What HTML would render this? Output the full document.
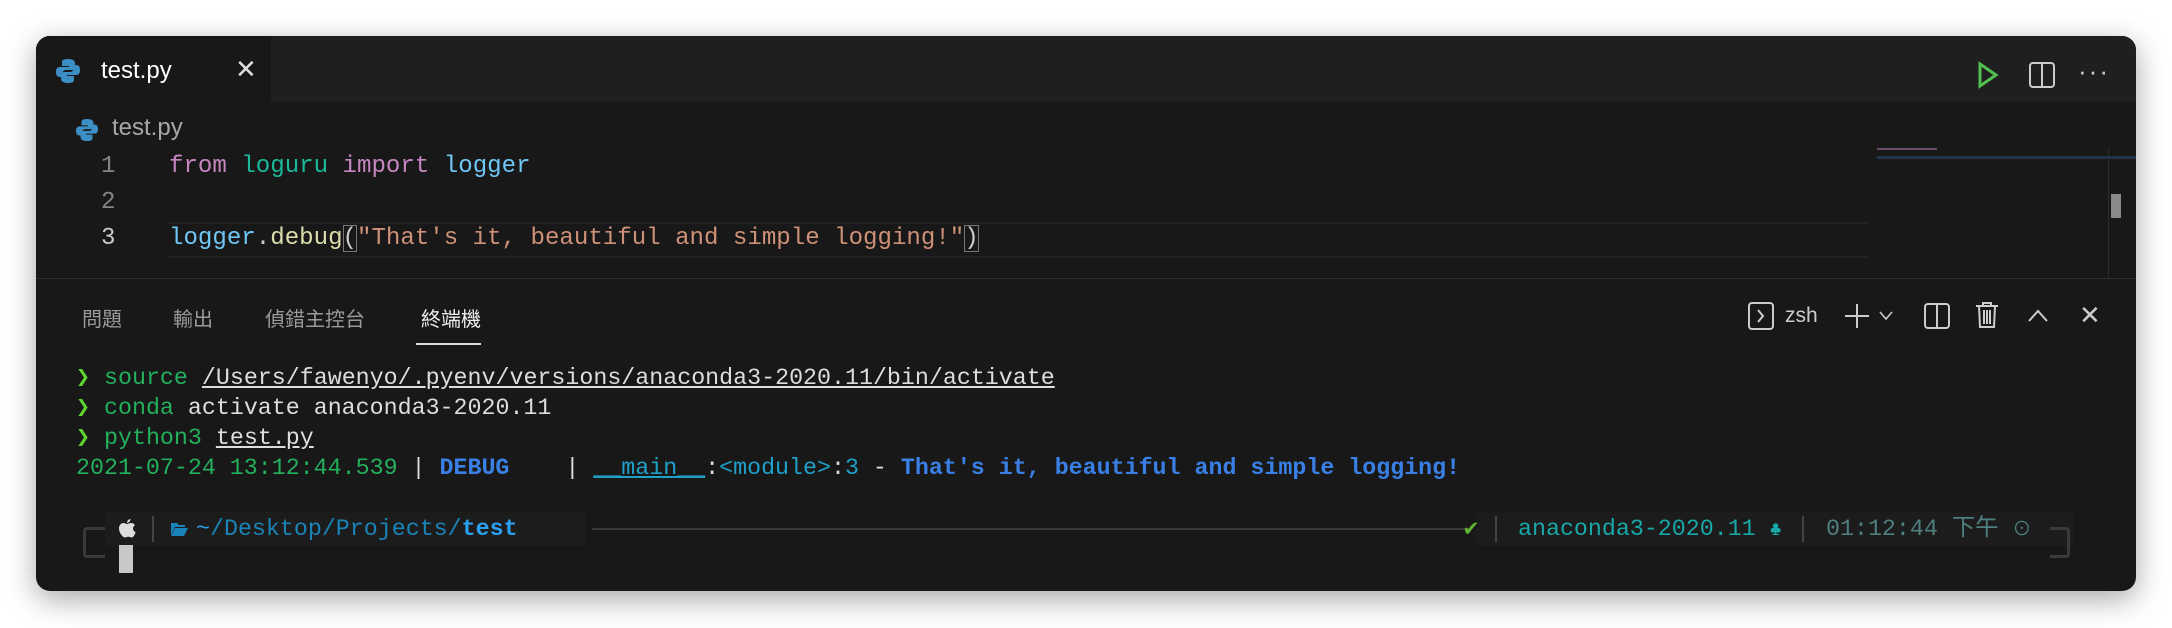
<!DOCTYPE html>
<html><head><meta charset="utf-8"><style>
*{margin:0;padding:0;box-sizing:border-box}
body{width:2172px;height:628px;background:#fff;position:relative;overflow:hidden;font-family:"Liberation Sans","Noto Sans CJK TC",sans-serif}
.win{position:absolute;left:36px;top:36px;width:2100px;height:555px;background:#181818;border-radius:14px;overflow:hidden;box-shadow:0 8px 30px rgba(0,0,0,.35)}
.a{position:absolute;white-space:pre}
.mono{font-family:"Liberation Mono","Noto Sans CJK TC",monospace}
.code{font-size:24.1px;line-height:36px}
.term{font-size:23.3px;line-height:30px}
</style></head><body>
<div class="win">
 <div class="a" style="left:0;top:0;width:2100px;height:66px;background:#1f1f1f"></div>
 <div class="a" style="left:0;top:0;width:235px;height:66px;background:#181818"></div>
 <svg class="a" style="left:20px;top:22px" width="24" height="26" viewBox="0 0 24 26"><path d="M12 1c-6 0-6 2-6 4v3h7v1H4c-3 0-4 2-4 5s1 5 4 5h2v-3c0-2 2-4 4-4h6c2 0 3-1 3-3V5c0-2-2-4-7-4z" fill="#3c8fc4"/><path d="M12 25c6 0 6-2 6-4v-3h-7v-1h9c3 0 4-2 4-5s-1-5-4-5h-2v3c0 2-2 4-4 4H8c-2 0-3 1-3 3v4c0 2 2 4 7 4z" fill="#3c8fc4"/></svg>
 <div class="a" style="left:65px;top:21px;font-size:24px;color:#fff">test.py</div>
 <div class="a" style="left:199px;top:18px;font-size:26px;color:#ddd">✕</div>
 <svg class="a" style="left:1940px;top:25px" width="24" height="28"><path d="M4 3L20 14L4 25Z" fill="none" stroke="#4fbf52" stroke-width="3"/></svg>
 <svg class="a" style="left:1992px;top:25px" width="28" height="28"><rect x="2" y="2" width="24" height="24" rx="3" fill="none" stroke="#ccc" stroke-width="2"/><line x1="14" y1="2" x2="14" y2="26" stroke="#ccc" stroke-width="2"/></svg>
 <div class="a" style="left:2042px;top:20px;font-size:26px;color:#ccc;letter-spacing:2px">···</div>

 <svg class="a" style="left:40px;top:82px" width="22" height="24" viewBox="0 0 24 26"><path d="M12 1c-6 0-6 2-6 4v3h7v1H4c-3 0-4 2-4 5s1 5 4 5h2v-3c0-2 2-4 4-4h6c2 0 3-1 3-3V5c0-2-2-4-7-4z" fill="#3c8fc4"/><path d="M12 25c6 0 6-2 6-4v-3h-7v-1h9c3 0 4-2 4-5s-1-5-4-5h-2v3c0 2-2 4-4 4H8c-2 0-3 1-3 3v4c0 2 2 4 7 4z" fill="#3c8fc4"/></svg>
 <div class="a" style="left:76px;top:78px;font-size:24px;color:#a8a8a8">test.py</div>

 <div class="a" style="left:133px;top:186px;width:1700px;height:36px;border-top:2px solid #222;border-bottom:2px solid #222"></div>
 <div class="a mono code" style="left:65px;top:113px;color:#858585">1<br>2<br><span style="color:#ccc">3</span></div>
 <div class="a mono code" style="left:133px;top:113px;color:#ccc"><span style="color:#c586c0">from</span> <span style="color:#19b99a">loguru</span> <span style="color:#c586c0">import</span> <span style="color:#6fc7f5">logger</span>

<span style="color:#6fc7f5">logger</span>.<span style="color:#dcdcaa">debug</span><span style="outline:1.5px solid #777;outline-offset:-1px">(</span><span style="color:#ce9178">"That's it, beautiful and simple logging!"</span><span style="outline:1.5px solid #777;outline-offset:-1px">)</span></div>
 <div class="a" style="left:1841px;top:112px;width:60px;height:2px;background:#6a4d6c"></div>
 <div class="a" style="left:1841px;top:120px;width:268px;height:3px;background:#22344a"></div>
 <div class="a" style="left:2072px;top:112px;width:1px;height:130px;background:#2d2d2d"></div>
 <div class="a" style="left:2075px;top:158px;width:10px;height:24px;background:#8a8a8a"></div>

 <div class="a" style="left:0;top:242px;width:2100px;height:1px;background:#2e2e2e"></div>
 <div class="a" style="left:46px;top:267px;font-size:20px;color:#9a9a9a">問題</div>
 <div class="a" style="left:137px;top:267px;font-size:20px;color:#9a9a9a">輸出</div>
 <div class="a" style="left:229px;top:267px;font-size:20px;color:#9a9a9a">偵錯主控台</div>
 <div class="a" style="left:385px;top:267px;font-size:20px;color:#eee">終端機</div>
 <div class="a" style="left:380px;top:307px;width:65px;height:2px;background:#ddd"></div>

 <svg class="a" style="left:1711px;top:265px" width="28" height="30"><rect x="2" y="2" width="24" height="26" rx="3" fill="none" stroke="#ccc" stroke-width="2"/><path d="M11 9l5 6-5 6" fill="none" stroke="#ccc" stroke-width="2"/></svg>
 <div class="a" style="left:1749px;top:268px;font-size:21px;color:#ccc">zsh</div>
 <svg class="a" style="left:1807px;top:266px" width="28" height="28"><path d="M14 2v24M2 14h24" stroke="#ccc" stroke-width="2"/></svg>
 <svg class="a" style="left:1842px;top:274px" width="16" height="12"><path d="M2 2l6 7 6-7" fill="none" stroke="#ccc" stroke-width="1.6"/></svg>
 <svg class="a" style="left:1887px;top:266px" width="28" height="28"><rect x="2" y="2" width="24" height="24" rx="3" fill="none" stroke="#ccc" stroke-width="2"/><line x1="14" y1="2" x2="14" y2="26" stroke="#ccc" stroke-width="2"/></svg>
 <svg class="a" style="left:1938px;top:264px" width="26" height="30"><path d="M2 6h22M9 6V3h8v3M5 6l1 21h14l1-21M10 10v14M13 10v14M16 10v14" fill="none" stroke="#ccc" stroke-width="2"/></svg>
 <svg class="a" style="left:1991px;top:272px" width="22" height="16"><path d="M2 13l9-10 9 10" fill="none" stroke="#ccc" stroke-width="2"/></svg>
 <div class="a" style="left:2043px;top:264px;font-size:26px;color:#ccc">✕</div>

 <div class="a mono term" style="left:40px;top:327px;color:#ddd"><span style="color:#5fd32e">❯</span> <span style="color:#23b05c">source</span> <span style="text-decoration:underline">/Users/fawenyo/.pyenv/versions/anaconda3-2020.11/bin/activate</span>
<span style="color:#5fd32e">❯</span> <span style="color:#23b05c">conda</span> activate anaconda3-2020.11
<span style="color:#5fd32e">❯</span> <span style="color:#23b05c">python3</span> <span style="text-decoration:underline">test.py</span>
<span style="color:#23b05c">2021-07-24 13:12:44.539</span> | <b style="color:#3a7fe6">DEBUG</b>    | <span style="color:#1fa0c8"><u>__main__</u></span>:<span style="color:#1fa0c8">&lt;module&gt;</span>:<span style="color:#1fa0c8">3</span> - <b style="color:#3a7fe6">That's it, beautiful and simple logging!</b></div>

 <div class="a" style="left:47px;top:491px;width:22px;height:31px;border:3px solid #3a3a3a;border-right:none;border-radius:4px 0 0 4px"></div>
 <div class="a" style="left:69px;top:476px;width:480px;height:34px;background:#1c1c1c"></div>
 <svg class="a" style="left:81px;top:482px" width="20" height="22" viewBox="0 0 20 22"><path d="M10 6c1-.1 2.5-1 4-1 2 0 3.3 1 4 2.2-3 1.7-2.5 5.8.6 7-.7 2.2-2.3 5.300-4 5.300-1.3 0-1.6-.8-3.3-.8s-2.1.8-3.3.8C6 19.5 2 15 2 10.5 2 7 4.2 5 6.4 5c1.4 0 2.6 1 3.6 1z" fill="#ddd"/><path d="M10 4.8c0-2 1.6-3.6 3.4-3.8.2 2-1.6 3.9-3.4 3.8z" fill="#ddd"/></svg>
 <div class="a" style="left:83px;top:509px;width:14px;height:28px;background:#c8c8c8"></div>
 <div class="a" style="left:116px;top:480px;width:2px;height:26px;background:#444"></div>
 <svg class="a" style="left:134px;top:485px" width="18" height="16"><path d="M1 2h6l2 2h6v2H5L1 14z" fill="#1a84b8"/><path d="M5 7h13l-4 8H1z" fill="#1a84b8"/></svg>
 <div class="a mono term" style="left:160px;top:478px;color:#1a84b8"><span style="color:#2aa0e6">~</span>/Desktop/Projects/<b style="color:#2aa0f0">test</b></div>
 <div class="a" style="left:556px;top:492px;width:880px;height:2px;background:#3a3a3a"></div>
 <div class="a" style="left:1440px;top:476px;width:598px;height:34px;background:#1c1c1c"></div>
 <div class="a mono term" style="left:1428px;top:478px;color:#5fb52e">✔</div>
 <div class="a" style="left:1459px;top:480px;width:2px;height:26px;background:#444"></div>
 <div class="a mono term" style="left:1482px;top:478px;color:#18a8a8">anaconda3-2020.11 <span style="font-size:20px">♣</span></div>
 <div class="a" style="left:1766px;top:480px;width:2px;height:26px;background:#444"></div>
 <div class="a mono term" style="left:1790px;top:478px;color:#4f7f7f">01:12:44 下午 <span style="font-size:19px">⊙</span></div>
 <div class="a" style="left:2014px;top:491px;width:20px;height:31px;border:3px solid #3a3a3a;border-left:none;border-radius:0 4px 4px 0"></div>
</div>
</body></html>
